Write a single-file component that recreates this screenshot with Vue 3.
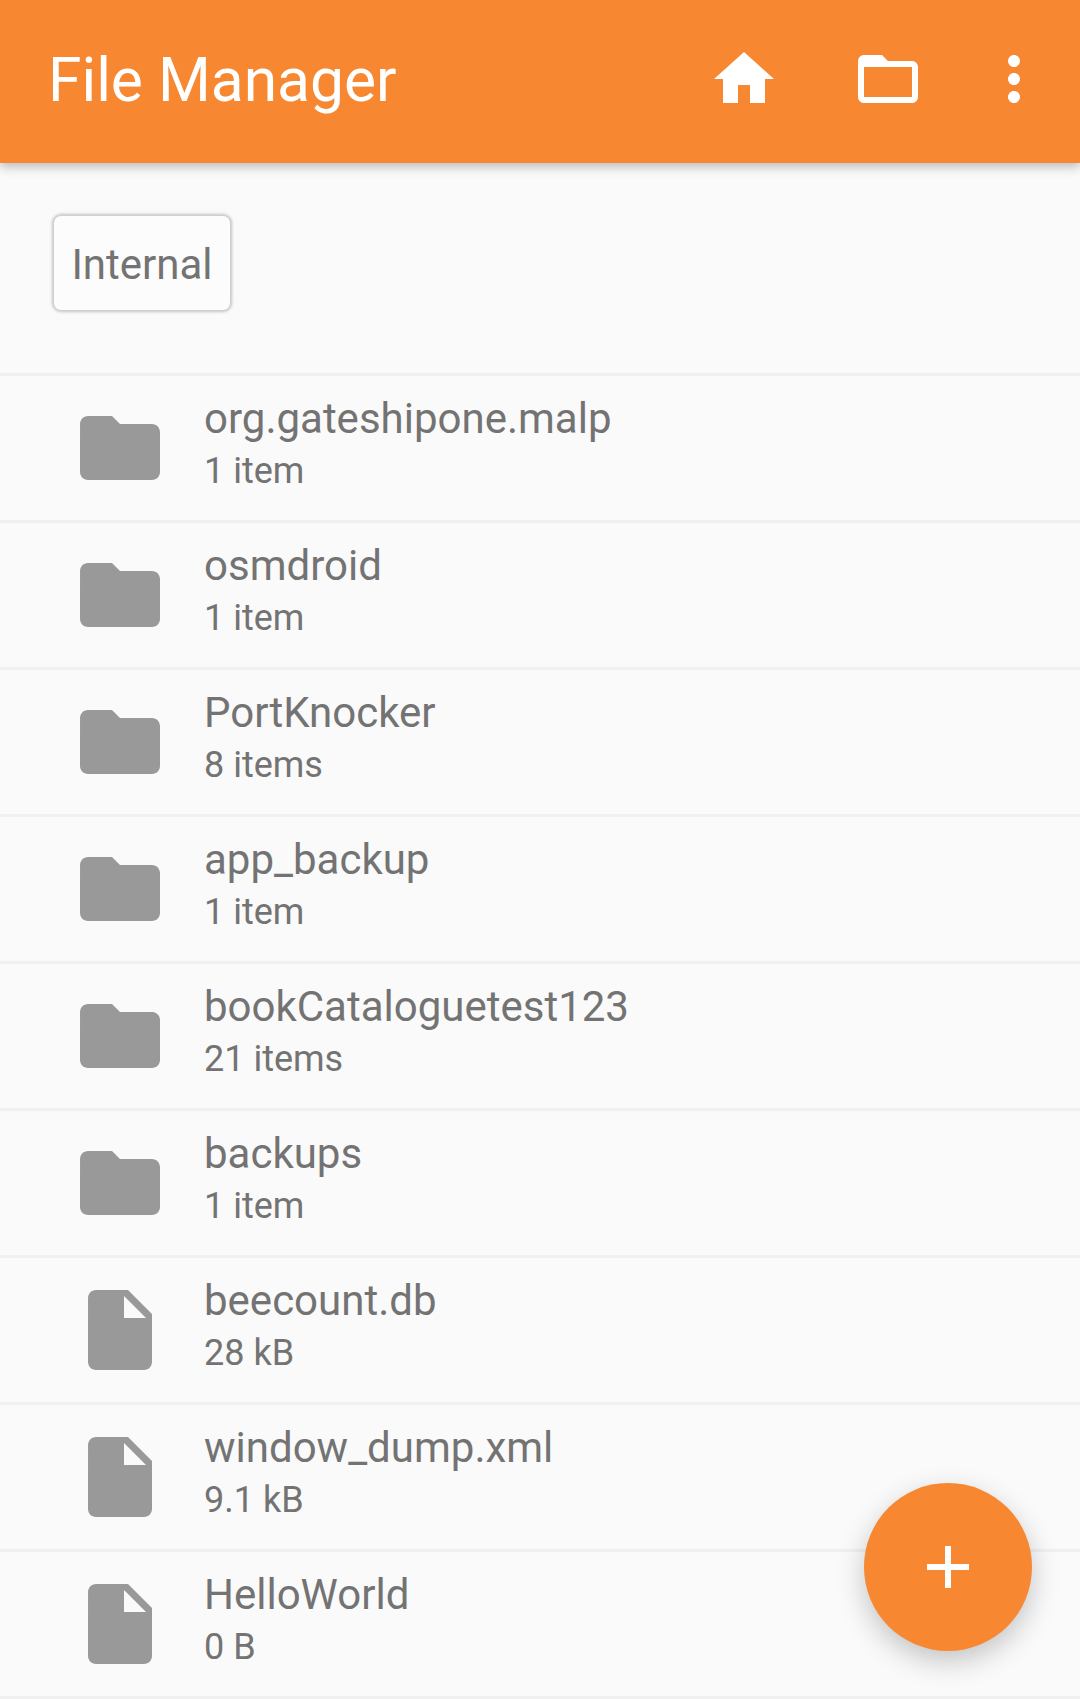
<script setup>
const entries = [
  { name: "org.gateshipone.malp", info: "1 item", dir: true },
  { name: "osmdroid", info: "1 item", dir: true },
  { name: "PortKnocker", info: "8 items", dir: true },
  { name: "app_backup", info: "1 item", dir: true },
  { name: "bookCataloguetest123", info: "21 items", dir: true },
  { name: "backups", info: "1 item", dir: true },
  { name: "beecount.db", info: "28 kB", dir: false },
  { name: "window_dump.xml", info: "9.1 kB", dir: false },
  { name: "HelloWorld", info: "0 B", dir: false },
];
</script>

<template>
  <div class="screen">
    <header class="toolbar">
      <h1 class="title">File Manager</h1>
      <div class="actions">
        <button class="action">
          <svg viewBox="0 0 24 24" class="action-icon"><path d="M10 20v-6h4v6h5v-8h3L12 3 2 12h3v8z" /></svg>
        </button>
        <button class="action">
          <svg viewBox="0 0 24 24" class="action-icon"><path d="M20 6h-8l-2-2H4c-1.1 0-1.99.9-1.99 2L2 18c0 1.1.9 2 2 2h16c1.1 0 2-.9 2-2V8c0-1.1-.9-2-2-2zm0 12H4V8h16v10z" /></svg>
        </button>
        <button class="action action--more">
          <svg viewBox="0 0 24 24" class="action-icon"><path d="M12 8c1.1 0 2-.9 2-2s-.9-2-2-2-2 .9-2 2 .9 2 2 2zm0 2c-1.1 0-2 .9-2 2s.9 2 2 2 2-.9 2-2-.9-2-2-2zm0 6c-1.1 0-2 .9-2 2s.9 2 2 2 2-.9 2-2-.9-2-2-2z" /></svg>
        </button>
      </div>
    </header>

    <div class="storage">
      <button class="storage-btn">Internal</button>
    </div>

    <ul class="list">
      <li v-for="entry in entries" :key="entry.name" class="row">
        <svg viewBox="0 0 24 24" class="row-icon">
          <path
            v-if="entry.dir"
            d="M10 4H4c-1.1 0-1.99.9-1.99 2L2 18c0 1.1.9 2 2 2h16c1.1 0 2-.9 2-2V8c0-1.1-.9-2-2-2h-8l-2-2z"
          />
          <path
            v-else
            d="M6 2c-1.1 0-1.99.9-1.99 2L4 20c0 1.1.89 2 1.99 2H18c1.1 0 2-.9 2-2V8l-6-6H6zm7 7V3.5L18.5 9H13z"
          />
        </svg>
        <div class="row-text">
          <span class="row-name">{{ entry.name }}</span>
          <span class="row-info">{{ entry.info }}</span>
        </div>
      </li>
    </ul>

    <button class="fab">
      <svg viewBox="0 0 24 24" class="fab-icon"><path d="M19 13h-6v6h-2v-6H5v-2h6V5h2v6h6v2z" /></svg>
    </button>
  </div>
</template>

<style>
html,
body {
  margin: 0;
  background: #fafafa;
}
</style>

<style scoped>
.screen {
  position: relative;
  width: 1080px;
  height: 1699px;
  overflow: hidden;
  background: #fafafa;
  font-family: Roboto, "Liberation Sans", sans-serif;
}

.toolbar {
  position: relative;
  z-index: 1;
  display: flex;
  justify-content: space-between;
  height: 163px;
  background: #f78731;
  box-shadow: 0 4px 10px rgba(0, 0, 0, 0.25);
}

.title {
  margin: 0;
  padding-left: 48px;
  font-size: 60.5px;
  font-weight: 400;
  line-height: 162px;
  color: #fff;
}

.actions {
  display: flex;
  padding-right: 12px;
}

.action {
  width: 144px;
  height: 158px;
  padding: 0;
  border: none;
  background: none;
  display: flex;
  align-items: center;
  justify-content: center;
}

.action--more {
  width: 108px;
}

.action-icon {
  width: 72px;
  height: 72px;
  fill: #fff;
}

.storage {
  height: 210px;
  padding: 52px 0 0 53px;
  box-sizing: border-box;
}

.storage-btn {
  width: 178px;
  height: 96px;
  padding: 3px 0 0;
  box-sizing: border-box;
  border: 1px solid #d0d0d0;
  border-radius: 8px;
  background: #fcfcfc;
  box-shadow: 0 0 3px 1px rgba(0, 0, 0, 0.22);
  font-family: inherit;
  font-size: 42px;
  color: #737373;
}

.list {
  margin: 0;
  padding: 0;
  list-style: none;
  border-top: 3px solid #f0f0f0;
}

.row {
  display: flex;
  align-items: center;
  height: 144px;
  padding-left: 72px;
  border-bottom: 3px solid #f0f0f0;
}

.row-icon {
  width: 96px;
  height: 96px;
  fill: #999;
  flex: none;
}

.row-text {
  display: flex;
  flex-direction: column;
  margin-left: 36px;
  padding-bottom: 5px;
  color: #737373;
}

.row-name {
  font-size: 42px;
  line-height: 52px;
}

.row-info {
  font-size: 36px;
  line-height: 53px;
}

.fab {
  position: absolute;
  left: 864px;
  top: 1483px;
  width: 168px;
  height: 168px;
  padding: 0;
  border: none;
  border-radius: 50%;
  background: #f78731;
  box-shadow: 0 10px 28px rgba(0, 0, 0, 0.22);
  display: flex;
  align-items: center;
  justify-content: center;
}

.fab-icon {
  width: 72px;
  height: 72px;
  fill: #fff;
}
</style>
